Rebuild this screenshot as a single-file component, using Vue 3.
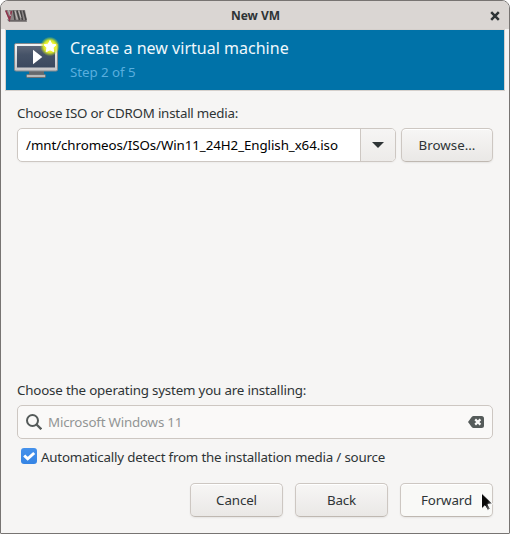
<script setup>
import { ref } from 'vue'

const isoPath = ref('/mnt/chromeos/ISOs/Win11_24H2_English_x64.iso')
const osName = ref('Microsoft Windows 11')
</script>

<template>
  <div class="window">
    <header class="titlebar">
      <svg class="app-icon" width="22" height="12" viewBox="0 0 22 12">
        <path d="M2 9.500h19.500l.5 2.200H4z" fill="#6b6767" />
        <path d="M0 0h20l2 10H4z" fill="#8b8686" />
        <path d="M.8.6 4.500 9.500 6.500 1" fill="none" stroke="#8f344c" stroke-width="1.500" />
        <path d="M8.500.5 10 10M12 .5l2.500 9.500M15.500.5l2 9.500M18.500.5l2.500 9.500" fill="none" stroke="#444242" stroke-width="1.500" />
        <path d="M3.500.3 5.500 6M10 .8l2.300 8.500M13.700.8l2.300 7" fill="none" stroke="#c1bdbb" stroke-width="1" />
      </svg>
      <span class="window-title">New VM</span>
      <svg class="close" width="10" height="10" viewBox="0 0 10 10">
        <path d="M1.200 1.200 8.800 8.800M8.800 1.200 1.200 8.800" stroke="#2e3436" stroke-width="2.500" />
      </svg>
    </header>

    <section class="banner">
      <svg class="banner-icon" width="48" height="44" viewBox="0 0 48 44">
        <defs>
          <linearGradient id="frame" x1="0" y1="0" x2="0" y2="1">
            <stop offset="0" stop-color="#f4f4f4" />
            <stop offset="1" stop-color="#c5c5c7" />
          </linearGradient>
          <linearGradient id="screen" x1="0" y1="0" x2="0" y2="1">
            <stop offset="0" stop-color="#5f6879" />
            <stop offset=".4" stop-color="#465368" />
            <stop offset="1" stop-color="#3b495f" />
          </linearGradient>
          <radialGradient id="glow">
            <stop offset=".4" stop-color="#f7f73c" />
            <stop offset=".65" stop-color="#e6ef1c" stop-opacity=".9" />
            <stop offset="1" stop-color="#b4dc28" stop-opacity="0" />
          </radialGradient>
        </defs>
        <path d="M17 34h15v4H17z" fill="#65696d" />
        <rect x="14.500" y="37.500" width="19" height="3" rx="1" fill="#b8b9b9" stroke="#6d7173" />
        <rect x="2.500" y="6.500" width="43" height="27.500" rx="1.500" fill="url(#frame)" stroke="#85898d" />
        <rect x="5" y="9" width="38" height="21.500" fill="url(#screen)" />
        <path d="M21 12.700v14.600l9.300-7.300z" fill="#fff" />
        <circle cx="38" cy="9.500" r="9.800" fill="url(#glow)" />
        <path d="m38 3.500 1.800 3.700 4.200.6-3 2.900.8 4.100-3.800-2-3.800 2 .8-4.100-3-2.900 4.200-.6z" fill="#fff" stroke="#fff" stroke-linejoin="round" />
      </svg>
      <div class="banner-text">
        <h1>Create a new virtual machine</h1>
        <p>Step 2 of 5</p>
      </div>
    </section>

    <main class="content">
      <label class="label iso-label">Choose ISO or CDROM install media:</label>
      <div class="media-row">
        <div class="combo">
          <div class="combo-value">{{ isoPath }}</div>
          <div class="combo-arrow">
            <svg width="12" height="6" viewBox="0 0 12 6"><path d="M0 0h12L6 6z" fill="#2e3436" /></svg>
          </div>
        </div>
        <button class="button browse">Browse...</button>
      </div>

      <label class="label os-label">Choose the operating system you are installing:</label>
      <div class="search">
        <svg width="16" height="16" viewBox="0 0 16 16">
          <circle cx="6.500" cy="6.500" r="5.500" fill="none" stroke="#555b5a" stroke-width="2" />
          <path d="m10.300 10.300 5 5" stroke="#555b5a" stroke-width="2.300" />
        </svg>
        <span class="search-text">{{ osName }}</span>
        <svg width="16" height="12" viewBox="0 0 16 12">
          <path d="M5.500 0H13.500Q16 0 16 2.500v7Q16 12 13.500 12H5.500Q4.500 12 3.700 11.100L0 6 3.700.9Q4.500 0 5.500 0z" fill="#555b5a" />
          <path d="m7.200 3.400 5.200 5.200M12.400 3.400 7.200 8.600" stroke="#faf9f8" stroke-width="2.200" />
        </svg>
      </div>
      <div class="check-row">
        <span class="checkbox">
          <svg width="16" height="16" viewBox="0 0 16 16">
            <path d="m3.200 7.500 3.500 3.300L13.200 5" fill="none" stroke="#fff" stroke-width="3" />
          </svg>
        </span>
        <span class="check-text">Automatically detect from the installation media / source</span>
      </div>
      <footer class="actions">
        <button class="button">Cancel</button>
        <button class="button">Back</button>
        <button class="button hover">Forward</button>
      </footer>
    </main>

    <svg class="cursor" width="14" height="22" viewBox="0 0 14 22">
      <defs>
        <linearGradient id="pointer" x1="0" y1="0" x2="1" y2="1">
          <stop offset=".5" stop-color="#080808" />
          <stop offset=".9" stop-color="#999" />
        </linearGradient>
      </defs>
      <path d="M.5 1v16l3.400-3.200 2.700 4.700 2.900-1.500L7 12.400l4.700-.6z" fill="url(#pointer)" stroke="#fff" stroke-width="1" />
    </svg>
  </div>
</template>

<style>
body {
  background: #fff;
}
</style>

<style scoped>
.window {
  position: relative;
  box-sizing: border-box;
  width: 510px;
  height: 534px;
  border: 1px solid #777472;
  border-radius: 8px 8px 1px 1px;
  background: #f6f5f4;
  color: #2e3436;
  font: 13.333px/18px "Noto Sans", sans-serif;
  overflow: hidden;
}
.titlebar {
  display: grid;
  grid-template-columns: 22px 1fr 10px;
  align-items: center;
  box-sizing: border-box;
  height: 28px;
  padding: 1px 9px 0 4px;
  background: #dad6d3;
}
.window-title {
  padding-right: 6px;
  color: #2e3436;
  font-size: 12px;
  font-weight: 700;
  text-align: center;
}
.banner {
  display: flex;
  box-sizing: border-box;
  height: 62px;
  margin: 0 4px;
  border: 1px solid #d5d0cc;
  background: #0072a8;
  padding: 7px 0 0 6px;
}
.banner-text {
  padding-left: 10px;
}
h1 {
  margin: 0;
  color: #f0f8fc;
  font-size: 16px;
  font-weight: 400;
  line-height: 22px;
  letter-spacing: .02px;
}
p {
  margin: 4px 0 0;
  color: #59aede;
  letter-spacing: -.06px;
}
.content {
  padding: 13px 16px 0;
}
.label {
  display: block;
  height: 18px;
}
.iso-label {
  letter-spacing: -.22px;
}
.media-row {
  display: flex;
  gap: 5px;
  margin-top: 6px;
}
.combo {
  display: flex;
  flex: 1;
  box-sizing: border-box;
  height: 34px;
  border: 1px solid #cdc7c2;
  border-radius: 5px;
  background: #fff;
  box-shadow: 0 1px 2px rgba(0, 0, 0, .04);
  overflow: hidden;
}
.combo-value {
  flex: 1;
  padding: 7px 8px;
  color: #000;
  letter-spacing: -.075px;
}
.combo-arrow {
  display: flex;
  align-items: center;
  justify-content: center;
  width: 34px;
  border-left: 1px solid #cdc7c2;
  background: linear-gradient(#f6f5f4, #edebe9);
}
.button {
  box-sizing: border-box;
  width: 93px;
  height: 34px;
  padding: 0;
  border: 1px solid #cdc7c2;
  border-bottom-color: #bfb8b1;
  border-radius: 5px;
  background: linear-gradient(#f7f6f5, #eae8e6);
  box-shadow: inset 0 1px #fff, 0 1px 2px rgba(0, 0, 0, .07);
  color: #2e3436;
  font: inherit;
  letter-spacing: -.12px;
}
.browse {
  width: 92px;
  letter-spacing: 0;
}
.hover {
  background: #f9f9f7;
}
.os-label {
  margin-top: 219px;
  letter-spacing: -.18px;
}
.search {
  display: flex;
  align-items: center;
  box-sizing: border-box;
  height: 34px;
  margin-top: 6px;
  padding: 0 8px;
  border: 1px solid #cdc7c2;
  border-radius: 5px;
  background: #faf9f8;
}
.search-text {
  flex: 1;
  padding-left: 6px;
  color: #929595;
  letter-spacing: -.2px;
}
.check-row {
  display: flex;
  align-items: center;
  height: 18px;
  margin-top: 9px;
  padding-left: 4px;
}
.checkbox {
  width: 16px;
  height: 16px;
  margin-top: -2px;
  border-radius: 3px;
  background: linear-gradient(#4591eb, #3584e4);
}
.checkbox svg {
  display: block;
}
.check-text {
  padding-left: 4px;
  letter-spacing: -.19px;
}
.actions {
  display: flex;
  justify-content: flex-end;
  gap: 12px;
  margin-top: 17px;
}
.cursor {
  position: absolute;
  left: 480px;
  top: 491px;
}
</style>
